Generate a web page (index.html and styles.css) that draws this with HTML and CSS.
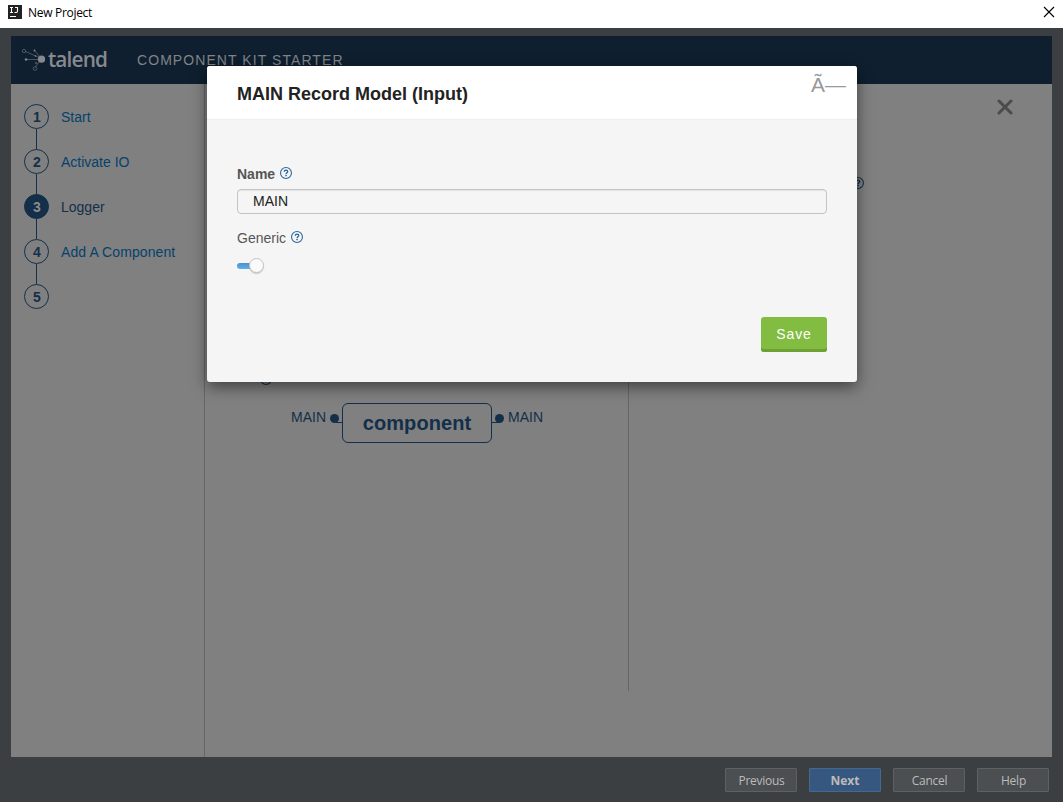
FILE: index.html
```html
<!DOCTYPE html>
<html lang="en">
<head>
<meta charset="utf-8">
<title>New Project</title>
<link rel="stylesheet" href="styles.css">
</head>
<body>
<svg class="defs" width="0" height="0">
  <symbol id="help" viewBox="0 0 12 12">
    <circle cx="6" cy="6" r="5.45" fill="none" stroke="currentColor" stroke-width="1.1"/>
    <path d="M4.3 4.7C4.3 3.5 5 3.1 6 3.1s1.7.6 1.7 1.5C7.7 5.7 6.1 5.7 6.1 7" fill="none" stroke="currentColor" stroke-width="1.4"/>
    <rect x="5.3" y="7.8" width="1.5" height="1.4" fill="currentColor"/>
  </symbol>
</svg>
<div class="window">
  <div class="titlebar">
    <svg class="ij" viewBox="0 0 14 14"><rect width="14" height="14" fill="#222"/><path d="M2 2.500h3M3.500 2.500v5M2 7.500h3M7 2.500h2.500v3.800q0 1.200-1.200 1.200H6.500M2 11.500h6" fill="none" stroke="#fff" stroke-width="1.100"/></svg>
    <span class="title">New Project</span>
    <svg class="win-close" viewBox="0 0 12 12"><path d="M1 1l10 10M11 1L1 11" stroke="#000" stroke-width="1.1"/></svg>
  </div>
  <div class="app">
    <header class="header">
      <svg class="spark" viewBox="0 0 24 24"><g fill="none" stroke="#737b83" stroke-width=".6"><path d="M3.500 3.500l16 7M12.500 2.500l7 8M4 11.500h15M13.500 19l5.500-8"/><circle cx="2" cy="3" r="1.700"/><circle cx="13" cy="20.500" r="1.800"/></g><g fill="#868a8e"><circle cx="19.500" cy="11.200" r="3.600"/><circle cx="12.500" cy="2.500" r=".9"/><circle cx="4" cy="11.500" r="1.200"/><circle cx="13.500" cy="8" r=".8"/><circle cx="14" cy="15" r=".8"/></g></svg>
      <span class="brand">talend</span>
      <span class="product">COMPONENT KIT STARTER</span>
    </header>
    <div class="body">
      <nav class="steps">
        <div class="step"><b>1</b><span>Start</span></div>
        <div class="step"><b>2</b><span>Activate IO</span></div>
        <div class="step active"><b>3</b><span>Logger</span></div>
        <div class="step"><b>4</b><span class="wide">Add A Component</span></div>
        <div class="step"><b>5</b><span></span></div>
      </nav>
      <main class="designer">
        <svg class="help peek-left"><use href="#help"/></svg>
        <div class="diagram">
          <span class="port">MAIN</span><i class="dot"></i><i class="link link-in"></i>
          <div class="component">component</div>
          <i class="link link-out"></i><i class="dot"></i><span class="port">MAIN</span>
        </div>
      </main>
      <aside class="details">
        <svg class="help peek-right"><use href="#help"/></svg>
        <svg class="panel-close" viewBox="0 0 16 16"><path d="M2 2l12 12M14 2L2 14" stroke="#4b4b4b" stroke-width="3" stroke-linecap="round"/></svg>
      </aside>
    </div>
  </div>
  <footer class="footer">
    <div class="btn">Previous</div><div class="btn primary">Next</div><div class="btn">Cancel</div><div class="btn">Help</div>
  </footer>
</div>
<section class="modal">
  <div class="modal-head"><h1>MAIN Record Model (Input)</h1><span class="modal-close">Ã—</span></div>
  <div class="modal-body">
    <div class="label strong">Name <svg class="help"><use href="#help"/></svg></div>
    <div class="input">MAIN</div>
    <div class="label generic">Generic <svg class="help"><use href="#help"/></svg></div>
    <div class="toggle"><i class="track"></i><i class="knob"></i></div>
    <div class="save">Save</div>
  </div>
</section>
</body>
</html>
```

FILE: styles.css
```css
* { box-sizing: border-box; }
body { margin: 0; font: 14px/20px "Liberation Sans", Arial, sans-serif; overflow: hidden; }
.defs { position: absolute; }
.window { width: 1063px; height: 802px; display: flex; flex-direction: column; background: #3c3f41; border-bottom: 1px solid #43393d; }
.titlebar { height: 28px; flex: none; background: #fff; display: flex; align-items: flex-start; padding: 5px 8px 0; }
.ij { width: 14px; height: 14px; }
.title { font: 12px/16px "Open Sans", "Noto Sans", sans-serif; color: #000; margin-left: 6px; letter-spacing: -.3px; }
.win-close { width: 12px; height: 12px; margin: 1px 0 0 auto; }
.app { margin: 8px 11px 0; height: 721px; display: flex; flex-direction: column; background: #808080; }
.header { height: 48px; flex: none; background: #0f1f2f; display: flex; padding-left: 11px; color: #868a8e; }
.spark { width: 24px; height: 24px; margin-top: 12px; }
.brand { font: 600 22px/24px "Open Sans", sans-serif; letter-spacing: -.9px; margin: 10px 0 0 2px; width: 60px; transform: scaleX(.945); transform-origin: left; }
.product { margin: 14px 0 0 29px; letter-spacing: 1.07px; color: #808488; white-space: nowrap; }
.body { flex: 1; display: flex; min-height: 0; }
.steps { width: 194px; border-right: 1px solid #666; padding: 20px 0 0 13px; display: flex; flex-direction: column; gap: 20px; color: #05426b; }
.step { display: flex; align-items: center; height: 25px; position: relative; }
.step b { width: 25px; height: 25px; border: 1px solid #132f49; border-radius: 50%; text-align: center; line-height: 24px; color: #132f49; padding-left: 1px; }
.step span { margin-left: 12px; padding-top: 1px; }
.step .wide { letter-spacing: .1px; }
.step:not(:last-child)::after { content: ""; position: absolute; left: 12px; top: 25px; width: 1px; height: 20px; background: #132f49; }
.active b { background: #132f49; color: #8b8b8b; }
.step.active b { color: #8b8b8b; }
.active span { color: #132f49; }
.designer { width: 424px; height: 607px; border-right: 1px solid #666; padding: 289px 0 0 55px; color: #132f49; }
.help { width: 12px; height: 12px; color: #2a679c; }
.peek-left, .peek-right { display: block; color: #132f49; }
.diagram { display: flex; height: 40px; margin: 18px 0 0 31px; align-items: flex-start; }
.port { padding-top: 4px; white-space: nowrap; width: 35px; }
.dot { width: 9px; height: 9px; border-radius: 50%; background: #132f49; margin: 11px 4px 0 4px; flex: none; }
.link { height: 1px; background: #132f49; margin-top: 19px; flex: none; }
.link-in { width: 6px; margin-left: -7px; }
.link-in { width: 6px; }
.link-out { width: 7px; }
.link-out + .dot { margin-left: -4px; margin-right: 4px; }
.component { width: 150px; height: 40px; border: 1px solid #132f49; border-radius: 6px; flex: none; text-align: center; font-weight: bold; font-size: 20px; line-height: 38px; letter-spacing: .1px; }
.details { flex: 1; display: flex; align-items: flex-start; justify-content: space-between; padding: 15px 39px 0 223px; }
.peek-right { margin-top: 78px; }
.panel-close { width: 16px; height: 16px; }
.footer { display: flex; gap: 12px; justify-content: flex-end; padding: 11px 14px 0 0; }
.btn { width: 72px; height: 24px; border: 1px solid #5e6162; border-radius: 1px; background: #4b4f51; color: #bbb; text-align: center; font: 12px/24px "Open Sans", "Noto Sans", sans-serif; letter-spacing: -.25px; padding-left: 1px; }
.primary { background: #365880; border-color: #43698e; font-weight: bold; letter-spacing: 0; padding-left: 0; }
.modal { position: absolute; left: 207px; top: 66px; width: 650px; height: 316px; background: #f5f5f5; border-radius: 3px; box-shadow: 0 5px 15px rgba(0,0,0,.5); overflow: hidden; }
.modal-head { height: 54px; background: #fff; border-bottom: 1px solid #eee; display: flex; justify-content: space-between; padding: 0 11px 0 30px; }
.modal-head h1 { margin: 18px 0 0; font-size: 18px; line-height: 21px; color: #222; }
.modal-close { font-size: 21px; line-height: 24px; color: #999; padding-top: 7px; }
.modal-body { padding: 44px 30px 0; color: #555; }
.label { display: flex; align-items: flex-start; gap: 5px; height: 20px; }
.strong { font-weight: bold; }
.label .help { margin-top: 3px; }
.input { height: 25px; border: 1px solid #c4c4c4; border-radius: 4px; box-shadow: inset 0 1px 1px rgba(0,0,0,.07); margin-top: 5px; padding-left: 15px; line-height: 23px; color: #222; }
.generic { margin-top: 14px; }
.toggle { display: flex; align-items: center; height: 16px; margin-top: 10px; }
.track { width: 15px; height: 6px; border-radius: 3px 0 0 3px; background: linear-gradient(#4a91ca, #60afed); }
.knob { width: 15px; height: 15px; border-radius: 50%; border: 1px solid #c5c5c5; background: #fafafa; box-shadow: 0 1px 1px rgba(0,0,0,.18); margin: 0 0 1px -3px; }
.save { width: 66px; height: 35px; border-radius: 3px; margin: 43px 0 0 auto; background: #82bd41; box-shadow: inset 0 -3px #6ea035; color: #fff; text-align: center; line-height: 34px; letter-spacing: .9px; }
```
